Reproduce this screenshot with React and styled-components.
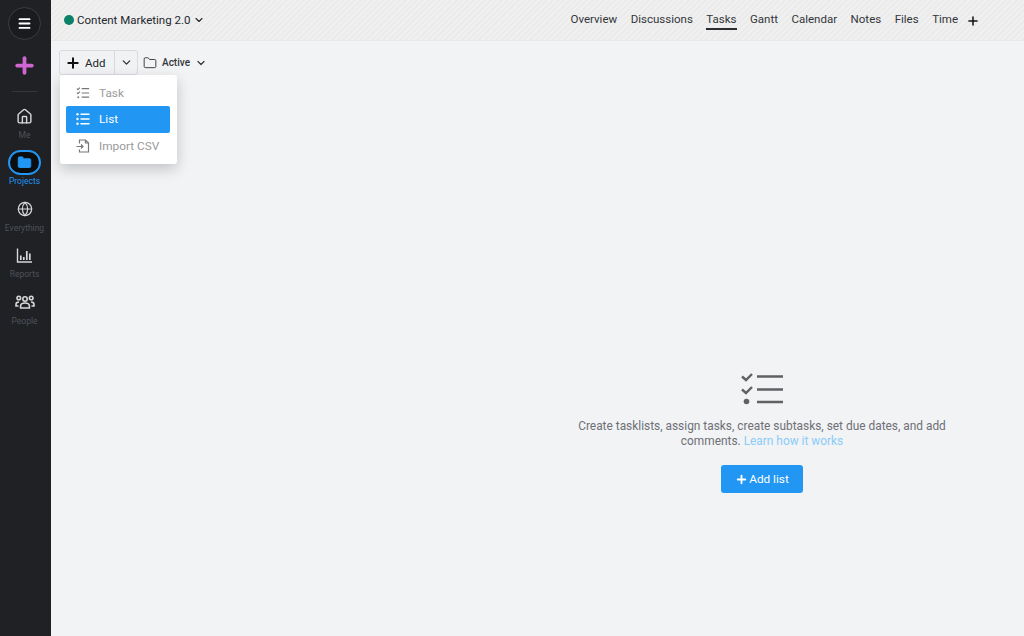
import React from "react";
import styled, { createGlobalStyle } from "styled-components";
import { ChevronDown, Menu, Home, Globe, Folder, Plus } from "lucide-react";

const GlobalStyle = createGlobalStyle`
  html, body { margin: 0; padding: 0; height: 100%; }
  body { font-family: Roboto, "Liberation Sans", sans-serif; background: #f2f3f5; overflow: hidden; }
  #root { height: 100%; }
`;

const ChecklistIcon = ({ size = 16 }) => (
  <svg width={size} height={size} viewBox="0 0 16 16" fill="none" stroke="currentColor" strokeWidth="1.4">
    <path d="M1 3l1.2 1.2 2.3-2.4M1 7.6l1.2 1.2 2.3-2.4" strokeWidth="1.2" />
    <circle cx="2.6" cy="12.8" r="1.1" fill="currentColor" stroke="none" />
    <path d="M6.5 3h8.5M6.5 8h8.5M6.5 12.8h8.5" />
  </svg>
);
const ListIcon = () => (
  <svg width="14" height="14" viewBox="0 0 14 14" fill="none" stroke="currentColor" strokeWidth="1.4">
    <circle cx="1.5" cy="2.2" r="1.2" fill="currentColor" stroke="none" />
    <circle cx="1.5" cy="7" r="1.2" fill="currentColor" stroke="none" />
    <circle cx="1.5" cy="11.8" r="1.2" fill="currentColor" stroke="none" />
    <path d="M4.5 2.2H13.5M4.5 7H13.5M4.5 11.8H13.5" />
  </svg>
);
const ImportIcon = () => (
  <svg width="14" height="14" viewBox="0 0 14 14" fill="none" stroke="currentColor" strokeWidth="1.2">
    <path d="M3.5 4.5V1h6l3 3v9h-9v-2.5" />
    <path d="M9.5 1v3h3M.5 7.5h6.5M5 5.5l2 2-2 2" />
  </svg>
);
const ReportsIcon = () => (
  <svg width="17" height="17" viewBox="0 0 17 17" fill="none" stroke="currentColor" strokeWidth="1.7">
    <path d="M1.5 1.5V15H16" strokeWidth="1.4" />
    <path d="M4.8 13V8.5M7.8 13V10M10.8 13V4M13.8 13V6.5" />
  </svg>
);
const PeopleIcon = () => (
  <svg width="20" height="17" viewBox="0 0 20 17" fill="none" stroke="currentColor" strokeWidth="1.6">
    <circle cx="10" cy="5" r="2.2" />
    <circle cx="3.8" cy="4" r="1.8" />
    <circle cx="16.2" cy="4" r="1.8" />
    <path d="M5.6 14v-2c0-2 2-3 4.4-3s4.4 1 4.4 3v2z" />
    <path d="M3.5 12H1v-1.5C1 8.8 2.4 8 4 8M16.5 12H19v-1.5C19 8.8 17.6 8 16 8" />
  </svg>
);

const Page = styled.div`
  display: flex;
  height: 636px;
  width: 1024px;
`;
const Sidebar = styled.nav`
  width: 51px;
  flex: none;
  background: #1f2125;
  display: flex;
  flex-direction: column;
  align-items: center;
  padding: 7px 2px 0 0;
  box-sizing: border-box;
`;
const MenuButton = styled.div`
  width: 33px;
  height: 33px;
  box-sizing: border-box;
  border-radius: 50%;
  border: 1px solid #3a3d42;
  background: #191b1e;
  color: #fff;
  display: flex;
  align-items: center;
  justify-content: center;
`;
const AddMark = styled.div`
  margin-top: 14px;
  height: 22px;
  color: #cf66d2;
  display: flex;
  align-items: center;
  justify-content: center;
`;
const Divider = styled.div`
  width: 26px;
  height: 1px;
  background: #33363b;
  margin: 15px 0 11.5px;
`;
const NavItem = styled.div`
  height: 46.5px;
  display: flex;
  flex-direction: column;
  align-items: center;
  color: ${(p) => (p.$active ? "#2196f3" : "#d8d8d8")};
`;
const NavIcon = styled.div`
  height: 25px;
  width: 33px;
  box-sizing: border-box;
  display: flex;
  align-items: center;
  justify-content: center;
  border-radius: 13px;
  border: ${(p) => (p.$active ? "2px solid #2196f3" : "none")};
  background: ${(p) => (p.$active ? "#0c0d0f" : "transparent")};
`;
const NavLabel = styled.span`
  font-size: 8.5px;
  line-height: 11px;
  margin-top: 1px;
  color: ${(p) => (p.$active ? "#2196f3" : "#4e5157")};
`;
const Main = styled.div`
  flex: 1;
  display: flex;
  flex-direction: column;
  min-width: 0;
`;
const Header = styled.header`
  height: 41px;
  flex: none;
  box-sizing: border-box;
  padding: 0 44px 2px 13px;
  display: flex;
  align-items: center;
  justify-content: space-between;
  border-bottom: 1px solid #e8e8e8;
  background: repeating-linear-gradient(135deg, #f0f0f0 0 2px, #ebebeb 2px 4px);
`;
const ProjectTitle = styled.div`
  display: flex;
  align-items: center;
  font-size: 11.5px;
  color: #24272b;
  gap: 3px;
  margin-top: 1px;
`;
const Dot = styled.span`
  width: 10px;
  height: 10px;
  border-radius: 50%;
  background: #0c8069;
`;
const Tabs = styled.div`
  display: flex;
  align-items: center;
  gap: 13.5px;
`;
const Tab = styled.div`
  font-size: 11.5px;
  line-height: 14px;
  color: #33363a;
  padding: 4px 0 2px;
  border-bottom: 2px solid ${(p) => (p.$active ? "#2a2c30" : "transparent")};
`;
const TabPlus = styled.div`
  color: #111;
  display: flex;
  margin: 3px 0 0 -5.5px;
`;
const Body = styled.div`
  flex: 1;
  display: flex;
  flex-direction: column;
  position: relative;
`;
const Toolbar = styled.div`
  display: flex;
  align-items: center;
  padding: 9px 0 0 8px;
  height: 25px;
`;
const SplitButton = styled.div`
  display: flex;
  height: 25px;
  box-sizing: border-box;
  border: 1px solid #d9dadd;
  border-radius: 3px;
  background: #f1f2f4;
`;
const AddPart = styled.div`
  display: flex;
  align-items: center;
  gap: 4px;
  width: 55px;
  padding-left: 5px;
  box-sizing: border-box;
  font-size: 11.5px;
  color: #24272b;
  border-right: 1px solid #d9dadd;
`;
const CaretPart = styled.div`
  width: 22px;
  display: flex;
  align-items: center;
  justify-content: center;
  color: #333;
`;
const Filter = styled.div`
  display: flex;
  align-items: center;
  margin-left: 5px;
  font-size: 10px;
  font-weight: 500;
  color: #33363a;
  gap: 5px;
`;
const Dropdown = styled.div`
  position: absolute;
  top: 34px;
  left: 9px;
  width: 117px;
  height: 89px;
  box-sizing: border-box;
  padding: 4.5px 7px 0 6px;
  background: #fff;
  border-radius: 3px;
  box-shadow: 0 5px 14px rgba(0, 0, 0, 0.2);
`;
const DropItem = styled.div`
  height: 26.5px;
  display: flex;
  align-items: center;
  gap: 9px;
  padding-left: 10px;
  font-size: 11.8px;
  border-radius: 2px;
  color: ${(p) => (p.$selected ? "#fff" : "#9a9a9a")};
  background: ${(p) => (p.$selected ? "#2196f3" : "transparent")};
  & > svg { color: ${(p) => (p.$selected ? "#fff" : "#777")}; }
`;
const EmptyWrap = styled.div`
  display: flex;
  justify-content: flex-end;
  padding: 297px 73px 0 0;
`;
const Empty = styled.div`
  width: 378px;
  display: flex;
  flex-direction: column;
  align-items: center;
  text-align: center;
`;
const EmptyIcon = styled.div`
  height: 34px;
  color: #5f6165;
`;
const EmptyText = styled.p`
  margin: 13px 0 0;
  font-size: 11.9px;
  line-height: 15px;
  color: #6e7075;
`;
const LearnLink = styled.a`
  color: #8ccbf8;
`;
const AddListButton = styled.button`
  margin-top: 16px;
  width: 82px;
  height: 28px;
  border: none;
  border-radius: 3px;
  background: #2196f3;
  color: #fff;
  font: 11.8px Roboto, sans-serif;
  display: flex;
  align-items: center;
  justify-content: center;
  gap: 1px;
`;

const navItems = [
  { label: "Me", icon: <Home size={17} strokeWidth={2} /> },
  { label: "Projects", icon: <Folder size={15} fill="#2196f3" strokeWidth={1.5} />, active: true },
  { label: "Everything", icon: <Globe size={16} strokeWidth={1.8} /> },
  { label: "Reports", icon: <ReportsIcon /> },
  { label: "People", icon: <PeopleIcon /> },
];
const tabs = ["Overview", "Discussions", "Tasks", "Gantt", "Calendar", "Notes", "Files", "Time"];

export default function App() {
  return (
    <Page>
      <GlobalStyle />
      <Sidebar>
        <MenuButton><Menu size={15} strokeWidth={3} /></MenuButton>
        <AddMark><Plus size={25} strokeWidth={3.6} /></AddMark>
        <Divider />
        {navItems.map((n) => (
          <NavItem key={n.label} $active={n.active}>
            <NavIcon $active={n.active}>{n.icon}</NavIcon>
            <NavLabel $active={n.active}>{n.label}</NavLabel>
          </NavItem>
        ))}
      </Sidebar>
      <Main>
        <Header>
          <ProjectTitle>
            <Dot />
            Content Marketing 2.0
            <ChevronDown size={12} strokeWidth={2.2} />
          </ProjectTitle>
          <Tabs>
            {tabs.map((t) => (
              <Tab key={t} $active={t === "Tasks"}>{t}</Tab>
            ))}
            <TabPlus><Plus size={14} strokeWidth={2.6} /></TabPlus>
          </Tabs>
        </Header>
        <Body>
          <Toolbar>
            <SplitButton>
              <AddPart><Plus size={16} strokeWidth={3} color="#111" />Add</AddPart>
              <CaretPart><ChevronDown size={13} strokeWidth={2.4} /></CaretPart>
            </SplitButton>
            <Filter>
              <Folder size={14} strokeWidth={1.6} />
              Active
              <ChevronDown size={12} strokeWidth={2.4} />
            </Filter>
          </Toolbar>
          <Dropdown>
            <DropItem><ChecklistIcon size={14} />Task</DropItem>
            <DropItem $selected><ListIcon />List</DropItem>
            <DropItem><ImportIcon />Import CSV</DropItem>
          </Dropdown>
          <EmptyWrap>
            <Empty>
              <EmptyIcon>
                <svg width="42" height="34" viewBox="0 0 42 34" fill="none" stroke="currentColor" strokeWidth="2.4">
                  <path d="M1 4.5l4 3.5 6-6M1 17.5l4 3.5 6-6" />
                  <circle cx="5.5" cy="29.5" r="2.8" fill="currentColor" stroke="none" />
                  <path d="M16 4.5h26M16 17.5h26M16 30h26" />
                </svg>
              </EmptyIcon>
              <EmptyText>
                Create tasklists, assign tasks, create subtasks, set due dates, and add comments.{" "}
                <LearnLink>Learn how it works</LearnLink>
              </EmptyText>
              <AddListButton><Plus size={13} strokeWidth={3.4} />Add list</AddListButton>
            </Empty>
          </EmptyWrap>
        </Body>
      </Main>
    </Page>
  );
}
